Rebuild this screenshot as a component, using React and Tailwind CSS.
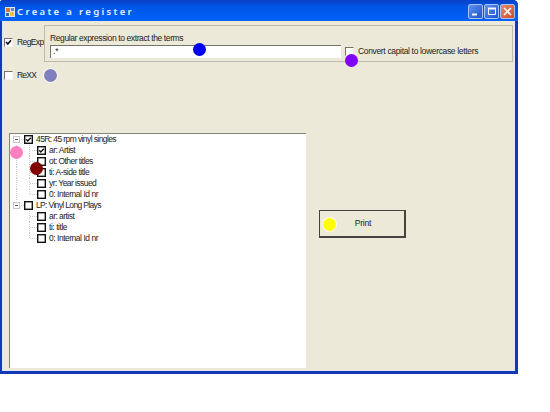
import React from "react";

const groups = [
  {
    label: "45R: 45 rpm vinyl singles",
    checked: true,
    spacing: "tracking-[-0.6px]",
    items: [
      { label: "ar: Artist", checked: true, spacing: "tracking-[-0.5px]" },
      { label: "ot: Other titles", spacing: "tracking-[-0.57px]" },
      { label: "ti: A-side title", spacing: "tracking-[-0.5px]" },
      { label: "yr: Year issued", spacing: "tracking-[-0.57px]" },
      { label: "0: Internal Id nr", spacing: "tracking-[-0.48px]" },
    ],
  },
  {
    label: "LP: Vinyl Long Plays",
    spacing: "tracking-[-0.65px]",
    items: [
      { label: "ar: artist", spacing: "tracking-[-0.55px]" },
      { label: "ti: title", spacing: "tracking-[-0.45px]" },
      { label: "0: Internal Id nr", spacing: "tracking-[-0.48px]" },
    ],
  },
];

function Check({ checked }) {
  return (
    <span className="block h-[9px] w-[9px] shrink-0 border border-t-[#77756b] border-l-[#77756b] border-r-[#f5f3ea] border-b-[#f5f3ea] bg-white">
      {checked && (
        <svg viewBox="0 0 7 7" className="block h-[7px] w-[7px]">
          <path d="M1 3l1.8 2L6 1.3" fill="none" stroke="#111" strokeWidth="1.6" />
        </svg>
      )}
    </span>
  );
}

function TreeCheck({ checked }) {
  return (
    <svg viewBox="0 0 9 9" className="-ml-[1px] mr-[1px] block h-[9px] w-[9px] shrink-0" fill="none" stroke="#111">
      <rect x="0.7" y="0.7" width="7.6" height="7.6" fill="#fff" strokeWidth="1.4" />
      {checked && <path d="M2.2 4.2l1.6 1.8L6.8 2.8" strokeWidth="1.4" />}
    </svg>
  );
}

function Expander() {
  return (
    <svg viewBox="0 0 15 11" className="h-[11px] w-[15px] shrink-0">
      <rect x="3.5" y="2.5" width="6" height="6" fill="#fff" stroke="#c6c6c6" />
      <path d="M5 5.5h3" stroke="#555" />
      <path d="M11 5.5h4" stroke="#d4d4d4" strokeDasharray="1 1" />
    </svg>
  );
}

function Branch({ last, trunk }) {
  return (
    <svg viewBox="0 0 28 11" className="h-[11px] w-[28px] shrink-0">
      {trunk && <path d="M6.5 0v11" stroke="#cccccc" strokeDasharray="1 1" />}
      <path d={last ? "M19.5 0v6" : "M19.5 0v11"} stroke="#cccccc" strokeDasharray="1 1" />
      <path d="M20 5.5h7" stroke="#cccccc" strokeDasharray="1 1" />
    </svg>
  );
}

function Tree() {
  return (
    <div className="flex h-[235px] w-[297px] flex-col border-t border-l border-[#858279] bg-white">
      {groups.map((g, gi) => (
        <React.Fragment key={g.label}>
          <div className="flex h-[11px] items-center">
            <Expander />
            <TreeCheck checked={g.checked} />
            <span className={"ml-[2px] " + g.spacing}>{g.label}</span>
          </div>
          {g.items.map((it, i) => (
            <div key={it.label} className="flex h-[11px] items-center">
              <Branch trunk={gi === 0} last={i === g.items.length - 1} />
              <TreeCheck checked={it.checked} />
              <span className={"ml-[2px] " + it.spacing}>{it.label}</span>
            </div>
          ))}
        </React.Fragment>
      ))}
    </div>
  );
}

function TitleButton({ kind }) {
  const close = kind === "close";
  return (
    <span
      className={
        "block h-[15px] w-[15px] rounded-[2px] border border-[#a9c3f4] bg-linear-to-br " +
        (close ? "from-[#e98968] to-[#cc4a28]" : "from-[#5f92f0] to-[#1f52cc]")
      }
    >
      <svg viewBox="0 0 13 13" className="block h-[13px] w-[13px]" fill="none" stroke="#f4f7ff">
        {kind === "min" && <path d="M3 9.5h5" strokeWidth="2" />}
        {kind === "max" && (
          <>
            <path d="M3 3.5h8" strokeWidth="2" />
            <path d="M3.5 3v6.5h7V3" />
          </>
        )}
        {close && <path d="M3 3l7 7M10 3l-7 7" strokeWidth="1.6" />}
      </svg>
    </span>
  );
}

function Marker({ className }) {
  return <span className={"absolute h-[13px] w-[13px] rounded-full " + className} />;
}

export default function App() {
  return (
    <div className="relative h-[412px] w-[550px] overflow-hidden bg-white font-['Liberation_Sans',Arial,sans-serif] text-[8.5px] leading-[11px] whitespace-nowrap text-[#222]">
      <div className="flex h-[374px] w-[518px] flex-col overflow-hidden rounded-tl-[3px] rounded-tr-[5px] bg-[#1238b4]">
        <header className="flex h-[21px] shrink-0 items-center bg-linear-to-b from-[#0a3fc4] via-[#0054e6] via-30% to-[#0462fb] pt-[2px] pr-[3px] pl-[5px]">
          <svg viewBox="0 0 10 10" className="h-[10px] w-[10px]">
            <rect width="10" height="10" fill="#dce6f2" />
            <rect x="1" y="1" width="4" height="4" fill="#d9763c" />
            <rect x="6" y="1" width="3" height="3" fill="#5f86c8" />
            <rect x="1" y="6" width="3" height="3" fill="#3d62ac" />
            <rect x="5" y="5" width="4" height="4" fill="#f1c232" />
          </svg>
          <h1 className="ml-[2px] grow font-['Noto_Sans',sans-serif] text-[9.5px] font-semibold tracking-[2.33px] text-[#e8f0ff]">
            Create a register
          </h1>
          <div className="flex gap-[1px]">
            <TitleButton kind="min" />
            <TitleButton kind="max" />
            <TitleButton kind="close" />
          </div>
        </header>
        <main className="mr-[3px] mb-[3px] ml-[2px] grow border-r border-b border-l border-[#dfe9fb] bg-[#ece9d8]">
          <div className="flex pt-[4px]">
            <label className="mt-[12px] ml-[1px] flex h-[11px] w-[40px] items-center">
              <Check checked />
              <span className="ml-[4px] tracking-[-0.6px]">RegExp</span>
            </label>
            <fieldset className="h-[37px] w-[469px] border border-[#bdbbad] pt-[7px] pl-[5px]">
              <div className="h-[12px] tracking-[-0.39px]">Regular expression to extract the terms</div>
              <div className="flex items-center">
                <div className="h-[13px] w-[291px] border-t border-l border-[#77756b] bg-white pl-[2px] leading-[11px]">.*</div>
                <label className="ml-[4px] flex items-center">
                  <Check />
                  <span className="ml-[4px] tracking-[-0.34px]">Convert capital to lowercase letters</span>
                </label>
              </div>
            </fieldset>
          </div>
          <label className="mt-[8px] ml-[1px] flex h-[11px] items-center">
            <Check />
            <span className="ml-[4px] tracking-[-0.8px]">ReXX</span>
          </label>
          <div className="mt-[52px] ml-[6px] flex">
            <Tree />
            <button className="mt-[77px] ml-[13px] h-[28px] w-[87px] border border-r-2 border-b-2 border-[#44433d] bg-[#ece9d8] pl-[2px] tracking-[-0.2px]">
              Print
            </button>
          </div>
        </main>
      </div>
      <Marker className="top-[43px] left-[193px] bg-[#0000f0]" />
      <Marker className="top-[54px] left-[345px] bg-[#8000f8]" />
      <Marker className="top-[69px] left-[44px] bg-[#8080c0] ring-1 ring-[#f8f6ec]" />
      <Marker className="top-[146px] left-[10px] bg-[#ff80c0]" />
      <Marker className="top-[162px] left-[30px] bg-[#800000]" />
      <Marker className="top-[218px] left-[323px] bg-[#ffff00] ring-1 ring-[#fcfbe8]" />
    </div>
  );
}
